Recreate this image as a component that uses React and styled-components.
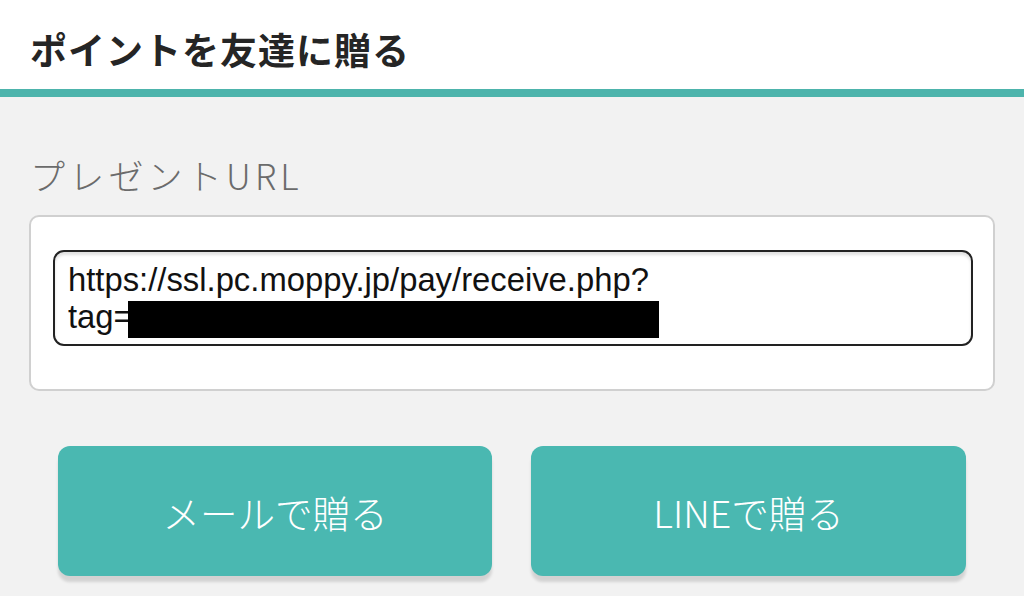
import React from "react";
import styled, { createGlobalStyle } from "styled-components";

const Global = createGlobalStyle`
  html, body { margin: 0; padding: 0; }
  body {
    width: 1024px;
    height: 596px;
    overflow: hidden;
    background: #f2f2f2;
    font-family: "Noto Sans CJK JP", "Noto Sans", sans-serif;
  }
`;

const Header = styled.header`
  height: 89px;
  background: #ffffff;
  border-bottom: 8px solid #4db4ac;
  display: flex;
  align-items: center;
  padding: 0 30px;
  box-sizing: content-box;
`;

const Title = styled.h1`
  margin: 0;
  font-size: 37px;
  font-weight: 700;
  color: #252525;
  letter-spacing: 1px;
  line-height: 1;
  transform: translateY(5px);
`;

const Content = styled.main`
  padding: 57px 29px 0;
`;

const Label = styled.div`
  font-size: 35px;
  font-weight: 300;
  color: #6b6b6b;
  line-height: 42px;
  letter-spacing: 4.2px;
  padding-left: 1px;
  margin-bottom: 19px;
`;

const Card = styled.section`
  background: #ffffff;
  border: 2px solid #d0d0d0;
  border-radius: 10px;
  padding: 33px 20px 43px 22px;
`;

const UrlBox = styled.div`
  border: 2px solid #222222;
  border-radius: 11px;
  padding: 9px 13px;
  height: 74px;
  box-shadow: inset 0 3px 3px rgba(0, 0, 0, 0.12);
  font-family: "Liberation Sans", Arial, sans-serif;
  font-size: 32.8px;
  line-height: 37px;
  color: #111111;
  white-space: nowrap;
`;

const Redacted = styled.span`
  display: inline-block;
  width: 531px;
  height: 37px;
  margin-left: -5px;
  background: #000000;
  vertical-align: -10px;
`;

const Buttons = styled.div`
  display: grid;
  grid-template-columns: 434px 435px;
  column-gap: 39px;
  padding: 55px 58px 0;
`;

const Button = styled.button`
  height: 130px;
  border: none;
  border-radius: 12px;
  background: #4ab8b1;
  color: #ffffff;
  font-family: "Noto Sans CJK JP", "Noto Sans", sans-serif;
  font-size: 37.5px;
  font-weight: 300;
  box-shadow: 0 6px 3px rgba(0, 0, 0, 0.13);
  cursor: pointer;
  padding: 0;
`;

export default function App() {
  return (
    <>
      <Global />
      <Header>
        <Title>ポイントを友達に贈る</Title>
      </Header>
      <Content>
        <Label>プレゼントURL</Label>
        <Card>
          <UrlBox>
            https://ssl.pc.moppy.jp/pay/receive.php?
            <br />
            tag=<Redacted />
          </UrlBox>
        </Card>
      </Content>
      <Buttons>
        <Button>メールで贈る</Button>
        <Button>LINEで贈る</Button>
      </Buttons>
    </>
  );
}
